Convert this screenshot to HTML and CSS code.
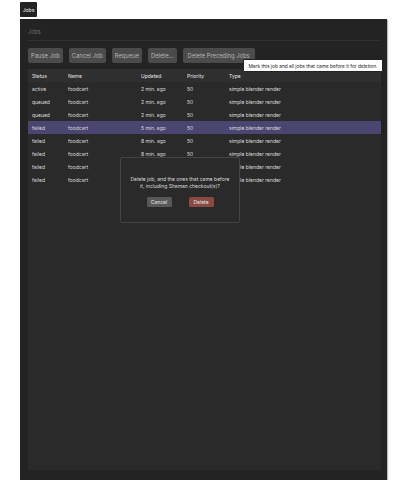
FILE: index.html
```html
<!DOCTYPE html>
<html>
<head>
<meta charset="utf-8">
<link rel="stylesheet" href="styles.css">
</head>
<body>
<div class="tab">Jobs</div>
<div class="window">
  <div class="title">Jobs</div>
  <div class="toolbar">
    <button class="btn">Pause Job</button>
    <button class="btn">Cancel Job</button>
    <button class="btn">Requeue</button>
    <button class="btn">Delete...</button>
    <button class="btn wide">Delete Preceding Jobs</button>
  </div>
  <div class="panel">
    <div class="row head"><span>Status</span><span>Name</span><span>Updated</span><span>Priority</span><span>Type</span></div>
    <div class="row"><span>active</span><span>foodcart</span><span>2 min. ago</span><span>50</span><span>simple blender render</span></div>
    <div class="row"><span>queued</span><span>foodcart</span><span>2 min. ago</span><span>50</span><span>simple blender render</span></div>
    <div class="row"><span>queued</span><span>foodcart</span><span>2 min. ago</span><span>50</span><span>simple blender render</span></div>
    <div class="row sel"><span>failed</span><span>foodcart</span><span>5 min. ago</span><span>50</span><span>simple blender render</span></div>
    <div class="row"><span>failed</span><span>foodcart</span><span>8 min. ago</span><span>50</span><span>simple blender render</span></div>
    <div class="row"><span>failed</span><span>foodcart</span><span>8 min. ago</span><span>50</span><span>simple blender render</span></div>
    <div class="row"><span>failed</span><span>foodcart</span><span></span><span></span><span>simple blender render</span></div>
    <div class="row"><span>failed</span><span>foodcart</span><span></span><span></span><span>simple blender render</span></div>
  </div>
  <div class="tooltip">Mark this job and all jobs that came before it for deletion.</div>
  <div class="dialog">
    <p class="msg"><span class="line">Delete job, and the ones that came before</span><span class="line">it, including Shaman checkout(s)?</span></p>
    <div class="actions">
      <button class="dbtn cancel">Cancel</button>
      <button class="dbtn delete">Delete</button>
    </div>
  </div>
</div>
</body>
</html>
```
FILE: styles.css
```css
html, body {
  margin: 0;
  padding: 0;
  background: #fff;
  font-family: Inter, "Liberation Sans", sans-serif;
}
.tab {
  margin: 2px 0 0 20px;
  width: 17px;
  height: 15px;
  background: #232323;
  color: #fff;
  font-size: 5px;
  display: flex;
  align-items: center;
  justify-content: center;
  border-radius: 1px;
}
.window {
  position: relative;
  margin: 2px 0 0 20px;
  width: 367px;
  height: 461px;
  box-sizing: border-box;
  background: #232323;
  padding: 0 6px 10px 8px;
  display: flex;
  flex-direction: column;
  box-shadow: 1px 1px 1px #bbb;
}
.title {
  height: 21px;
  line-height: 26px;
  font-size: 5.5px;
  color: #6f6f6f;
  border-bottom: 1px solid #303030;
  flex: none;
}
.toolbar {
  display: flex;
  gap: 6px;
  margin-top: 7px;
  flex: none;
}
.btn {
  height: 15px;
  padding: 0 3px;
  border: none;
  border-radius: 2px;
  background: #4b4b4b;
  color: #b5b5b5;
  font-family: inherit;
  font-size: 5.8px;
  margin: 0;
}
.btn.wide {
  padding: 0 5px;
}
.panel {
  margin-top: 6px;
  flex: 1;
  background: #2a2a2a;
}
.row {
  display: grid;
  grid-template-columns: 36px 73px 46px 42px 1fr;
  height: 13px;
  align-items: center;
  padding-left: 4px;
  font-size: 5px;
  color: #dcdcdc;
}
.row.head {
  background: #2f2f2f;
  color: #e8e8e8;
}
.row.sel {
  background: #4a4571;
}
.tooltip {
  position: absolute;
  left: 223px;
  top: 40px;
  width: 140px;
  height: 13px;
  box-sizing: border-box;
  background: #fff;
  border: 1px solid #222;
  border-radius: 1px;
  color: #222;
  font-size: 4.8px;
  display: flex;
  align-items: center;
  justify-content: center;
}
.dialog {
  position: absolute;
  left: 100px;
  top: 138px;
  width: 120px;
  height: 66px;
  box-sizing: border-box;
  background: #2a2a2a;
  border: 1px solid #454545;
  border-radius: 2px;
  display: flex;
  flex-direction: column;
  align-items: center;
}
.msg {
  margin: 18px 0 0;
  display: flex;
  flex-direction: column;
  align-items: center;
  gap: 1px;
  font-size: 5px;
  line-height: 6px;
  color: #dcdcdc;
  text-align: center;
}
.actions {
  display: flex;
  gap: 17px;
  margin-top: 8px;
}
.dbtn {
  width: 25px;
  height: 10px;
  padding: 0;
  border: none;
  border-radius: 1.5px;
  font-family: inherit;
  font-size: 5px;
  color: #e6e6e6;
}
.cancel { background: #585858; }
.delete { background: #8a4a41; }
```
